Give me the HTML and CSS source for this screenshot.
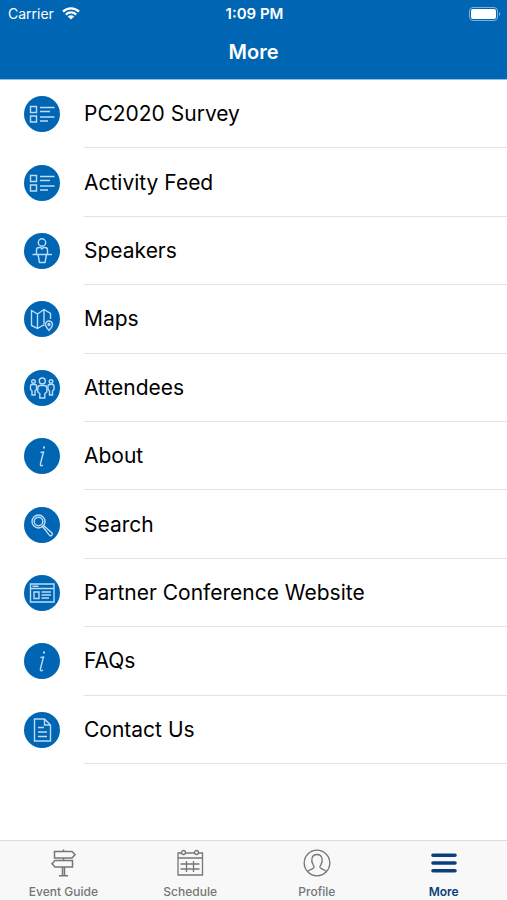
FILE: index.html
```
<!DOCTYPE html>
<html lang="en">
<head>
    <meta charset="UTF-8">
    <meta name="viewport" content="width=device-width, initial-scale=1.0">
    <title>More</title>
    <link rel="stylesheet" href="styles.css">
</head>
<body>
    <header class="header">
        <div class="status-bar">
            <div class="carrier">
                <span>Carrier</span>
                <svg class="wifi" viewBox="0 0 18 13" aria-hidden="true">
                    <path d="M1 4.600a11.500 11.500 0 0 1 16 0M3.800 7.600a7.400 7.400 0 0 1 10.400 0" fill="none" stroke="currentColor" stroke-width="2.2"/>
                    <path d="M9 12.600L5.800 9.600a4.600 4.600 0 0 1 6.400 0z" fill="currentColor"/>
                </svg>
            </div>
            <div class="time">1:09 PM</div>
            <svg class="battery" viewBox="0 0 32 14" aria-hidden="true">
                <rect x="0.5" y="0.5" width="28" height="13" rx="3.5" fill="none" stroke="#7db1dc"/>
                <rect x="2" y="2" width="25" height="10" rx="2" fill="#fff"/>
                <path d="M30 5v4c1.600-.6 1.600-3.400 0-4z" fill="#7db1dc"/>
            </svg>
        </div>
        <h1 class="title">More</h1>
    </header>

    <main class="content">
        <ul class="menu">
            <li><a class="menu-item" href="#survey">
                <svg class="menu-icon" viewBox="0 0 36 36" aria-hidden="true">
                    <path d="M6.500 10.500h6v6h-6zM6.500 20h6v6h-6zM16 11.500h14.500M16 15.500h10M16 21h14.500M16 25h8"/>
                </svg>
                <span class="menu-label">PC2020 Survey</span>
            </a></li>
            <li><a class="menu-item" href="#feed">
                <svg class="menu-icon" viewBox="0 0 36 36" aria-hidden="true">
                    <path d="M6.500 10.500h6v6h-6zM6.500 20h6v6h-6zM16 11.500h14.500M16 15.500h10M16 21h14.500M16 25h8"/>
                </svg>
                <span class="menu-label">Activity Feed</span>
            </a></li>
            <li><a class="menu-item" href="#speakers">
                <svg class="menu-icon" viewBox="0 0 36 36" aria-hidden="true">
                    <circle cx="18" cy="9.500" r="3.700"/>
                    <path d="M12.500 21v-4q0-2.500 2.500-2.500h1.500l1.500 1.500 1.500-1.500h1.500q2.500 0 2.500 2.500v4M8.500 21.500h19.500M14 21.500l1.500 8h5.500l1.500-8"/>
                </svg>
                <span class="menu-label">Speakers</span>
            </a></li>
            <li><a class="menu-item" href="#maps">
                <svg class="menu-icon" viewBox="0 0 36 36" aria-hidden="true">
                    <path d="M20.500 24.500l-1-.5-6 3.500-6-3V9.500l6 3.500 6.500-4.500 6.500 4v5.500M13.500 13v14.500M20 8.500V23"/>
                    <path d="M25 29.500c-2-2.500-3.500-4.200-3.500-6a3.500 3.500 0 0 1 7 0c0 1.800-1.500 3.500-3.500 6z"/>
                    <circle cx="25" cy="23.500" r="1"/>
                </svg>
                <span class="menu-label">Maps</span>
            </a></li>
            <li><a class="menu-item" href="#attendees">
                <svg class="menu-icon" viewBox="0 0 36 36" aria-hidden="true">
                    <circle cx="18.300" cy="11" r="3"/>
                    <path d="M16.300 15.500h4q2.500 0 2.500 2.500v4l-2 1.500V28h-5v-4.500l-2-1.500v-4q0-2.500 2.500-2.500z"/>
                    <circle cx="9.500" cy="11.500" r="1.800"/>
                    <path d="M8 14.500h3q1.500 0 1.500 1.500v3.500L11 21v4H8v-4l-1.500-1.500V16q0-1.500 1.500-1.500z"/>
                    <circle cx="27" cy="11.500" r="1.800"/>
                    <path d="M25.500 14.500h3q1.500 0 1.500 1.500v3.500L28.500 21v4h-3v-4L24 19.500V16q0-1.500 1.500-1.500z"/>
                </svg>
                <span class="menu-label">Attendees</span>
            </a></li>
            <li><a class="menu-item" href="#about">
                <svg class="menu-icon" viewBox="0 0 36 36" aria-hidden="true">
                    <path d="M16.500 14.500l3-.5-3 11.500c-.4 2.500.5 3 2.500 1.500"/>
                    <path d="M20 8.500v2" stroke-width="2"/>
                </svg>
                <span class="menu-label">About</span>
            </a></li>
            <li><a class="menu-item" href="#search">
                <svg class="menu-icon" viewBox="0 0 36 36" aria-hidden="true">
                    <circle cx="14.500" cy="14.500" r="6.500"/>
                    <circle cx="14.500" cy="14.500" r="4.300"/>
                    <path d="M18.500 19.500l1-1 8.500 7.500q1 1-.2 2.200-1.200 1.200-2.200.2z"/>
                </svg>
                <span class="menu-label">Search</span>
            </a></li>
            <li><a class="menu-item" href="#website">
                <svg class="menu-icon" viewBox="0 0 36 36" aria-hidden="true">
                    <path d="M6.500 9h23.500v18H6.500zM6.500 13.500H30M8.500 11.300h6M10 17h5v6.500h-5zM17.500 17H27M17.500 20H27M17.500 23H25"/>
                </svg>
                <span class="menu-label">Partner Conference Website</span>
            </a></li>
            <li><a class="menu-item" href="#faqs">
                <svg class="menu-icon" viewBox="0 0 36 36" aria-hidden="true">
                    <path d="M16.500 14.500l3-.5-3 11.500c-.4 2.500.5 3 2.500 1.500"/>
                    <path d="M20 8.500v2" stroke-width="2"/>
                </svg>
                <span class="menu-label">FAQs</span>
            </a></li>
            <li><a class="menu-item" href="#contact">
                <svg class="menu-icon" viewBox="0 0 36 36" aria-hidden="true">
                    <path d="M10.500 7h10l6 6v16h-16zM20.500 7v6h6M14 15.500h6M14 20h9M14 24.500h9"/>
                </svg>
                <span class="menu-label">Contact Us</span>
            </a></li>
        </ul>
    </main>

    <nav class="tab-bar">
        <a class="tab" href="#guide">
            <svg class="tab-icon" viewBox="0 0 28 28" aria-hidden="true">
                <path d="M14.500 .5v2M14.500 9v2.500M13.500 18v8M15.500 18v8M10 26.700h9M5.500 2.500h17.500l3 3.300-3 3.200H5.500zM23.500 11.500H6l-3 3.200 3 3.300h17.500z" stroke-width="1.5"/>
            </svg>
            <span>Event Guide</span>
        </a>
        <a class="tab" href="#schedule">
            <svg class="tab-icon" viewBox="0 0 28 28" aria-hidden="true">
                <path d="M5.500 4H2v22h24.500V4h-3.500M9.500 4h9M2 9h24.500M4.500 15h19M4.500 20h19M10.500 12v11M17.500 12v11"/>
                <circle cx="7.500" cy="3.500" r="2"/>
                <circle cx="20.500" cy="3.500" r="2"/>
            </svg>
            <span>Schedule</span>
        </a>
        <a class="tab" href="#profile">
            <svg class="tab-icon" viewBox="0 0 28 28" aria-hidden="true">
                <circle cx="14" cy="14" r="12.800"/>
                <path d="M4.500 22.500c1.500-2 6-2.500 6.500-4 .3-1-.2-1.500-.8-2.500C7.500 11.500 8.500 5.500 14 5.500s6.500 6 3.800 10.500c-.6 1-1.100 1.500-.8 2.500.5 1.500 5 2 6.500 4"/>
            </svg>
            <span>Profile</span>
        </a>
        <a class="tab active" href="#more" aria-current="page">
            <svg class="tab-icon" viewBox="0 0 28 28" aria-hidden="true">
                <path d="M3 6.300h22M3 14h22M3 21.700h22"/>
            </svg>
            <span>More</span>
        </a>
    </nav>
</body>
</html>
```
FILE: styles.css
```
* {
    margin: 0;
    padding: 0;
    box-sizing: border-box;
}

body {
    display: flex;
    flex-direction: column;
    min-height: 100vh;
    background-color: #fff;
    color: #000;
    font-family: Inter, "Liberation Sans", sans-serif;
}

a {
    color: inherit;
    text-decoration: none;
}

/* Header */
.header {
    border-bottom: 1px solid #8fbfe4;
    background-color: #0065b3;
    color: #fff;
}

.status-bar {
    display: grid;
    grid-template-columns: 1fr auto 1fr;
    align-items: center;
    height: 27px;
    padding: 0 6px 0 8px;
    font-size: 14px;
}

.carrier {
    display: flex;
    align-items: center;
    gap: 8px;
}

.wifi {
    width: 18px;
    height: 13px;
}

.time {
    font-size: 15px;
    font-weight: 600;
}

.battery {
    width: 32px;
    height: 14px;
    justify-self: end;
}

.title {
    height: 52px;
    font-size: 20px;
    font-weight: 600;
    line-height: 50px;
    text-align: center;
}

/* Menu list */
.content {
    display: flex;
    flex: 1;
    padding-bottom: 76px;
}

.menu {
    display: grid;
    flex: 1;
    grid-auto-rows: 1fr;
    list-style: none;
}

.menu-item {
    display: flex;
    align-items: center;
    gap: 24px;
    height: 100%;
    min-height: 48px;
    padding-left: 24px;
}

.menu-icon {
    width: 36px;
    height: 36px;
    border-radius: 50%;
    background-color: #0065b3;
    fill: none;
    stroke: #bcdcf7;
    stroke-width: 1.4;
}

.menu-label {
    display: flex;
    flex: 1;
    align-items: center;
    height: 100%;
    border-bottom: 1px solid #e2e2e4;
    font-size: 21px;
}

/* Bottom tabs */
.tab-bar {
    display: grid;
    grid-template-columns: repeat(4, 1fr);
    height: 60px;
    border-top: 1px solid #dcdcdc;
    background-color: #f8f8f8;
}

.tab {
    display: flex;
    flex-direction: column;
    align-items: center;
    gap: 7px;
    padding-top: 8px;
    color: #757575;
    font-size: 12px;
    font-weight: 500;
    line-height: 16px;
}

.tab-icon {
    width: 28px;
    height: 28px;
    fill: none;
    stroke: currentColor;
    stroke-width: 1.3;
}

.active {
    color: #0b3f7c;
    font-weight: 600;
}

.active .tab-icon {
    stroke-width: 3.6;
    stroke-linecap: round;
}
```
